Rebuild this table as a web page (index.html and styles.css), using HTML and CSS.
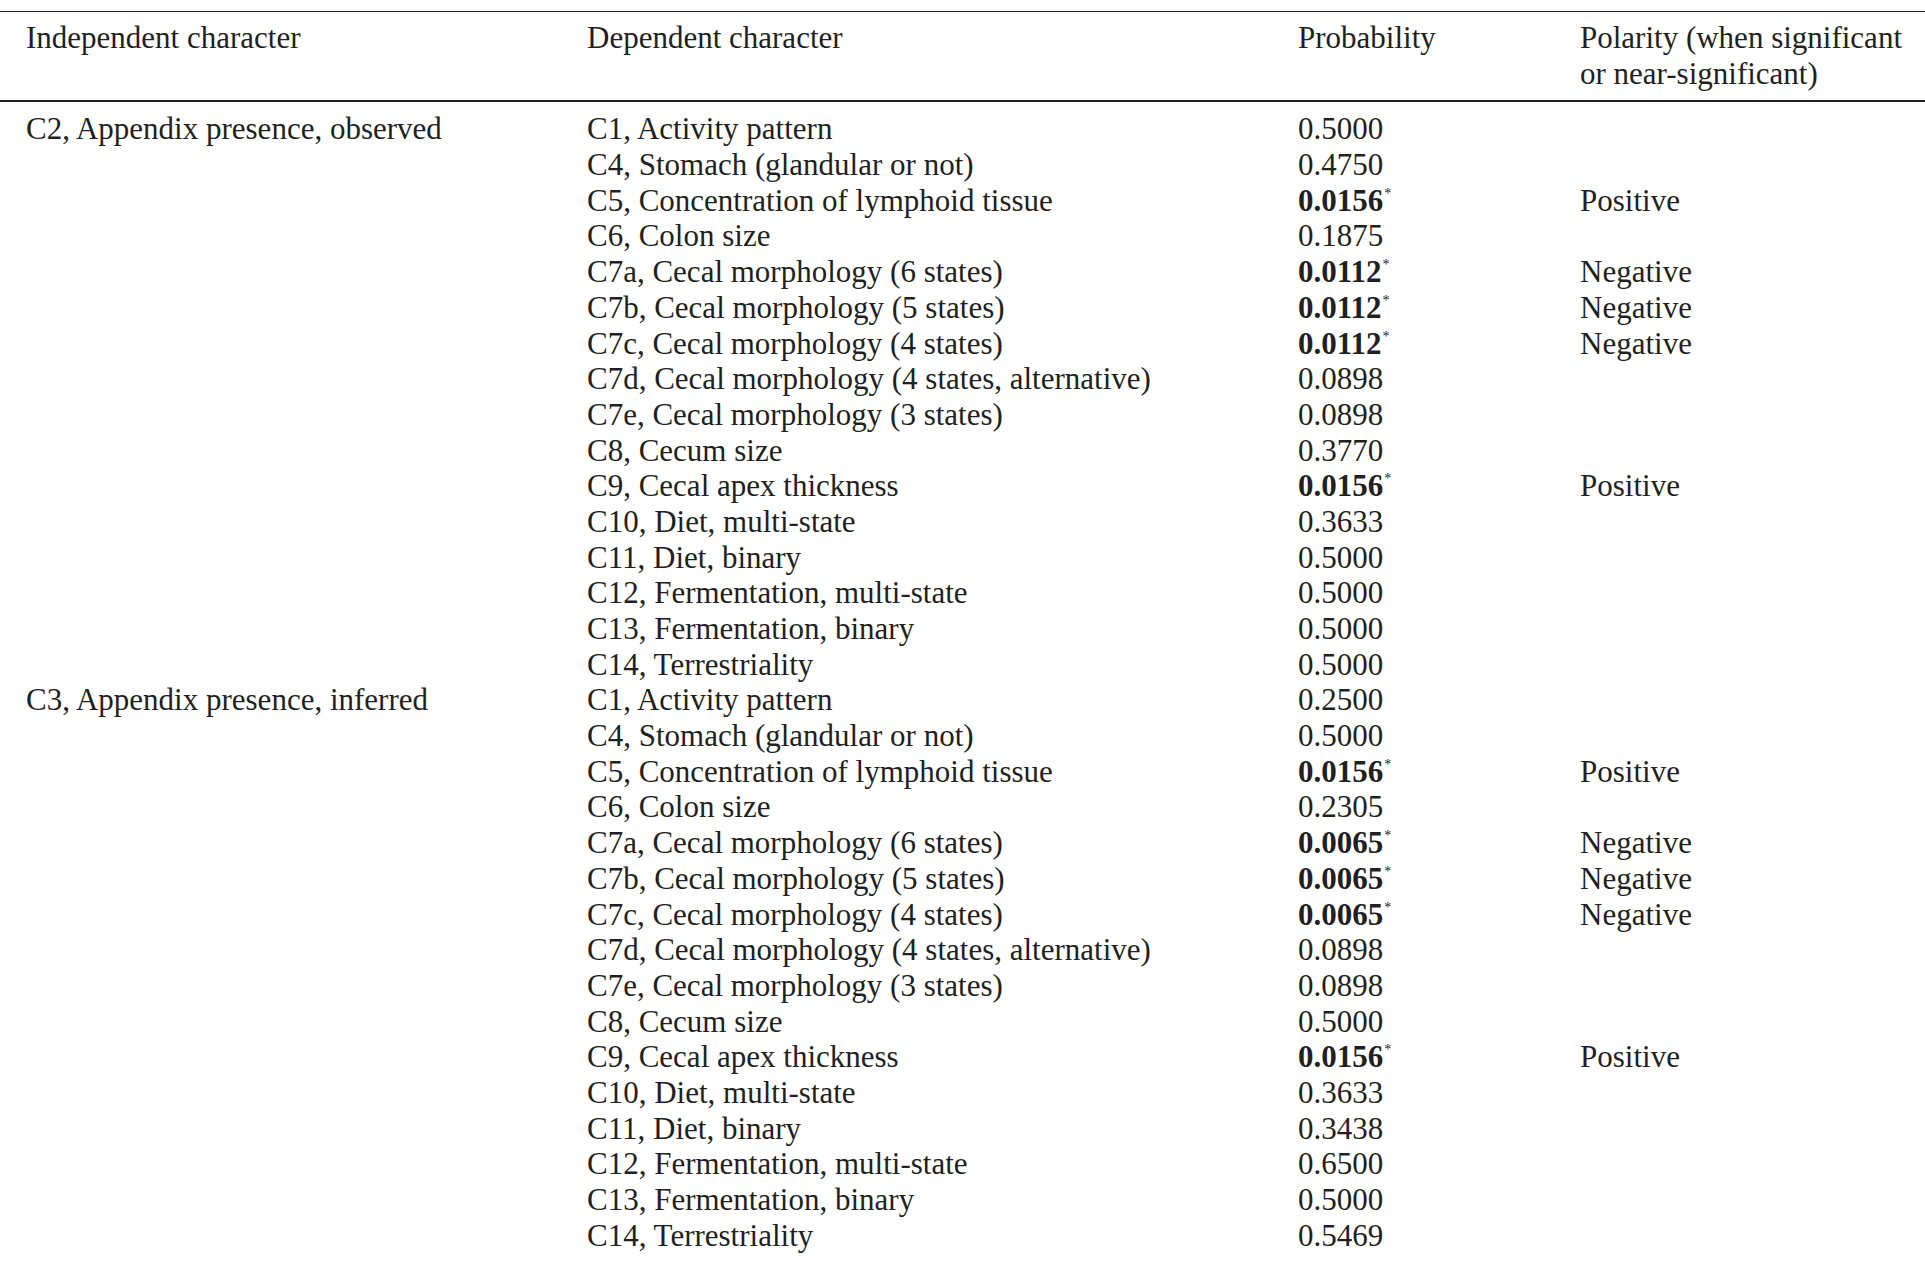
FILE: index.html
```html
<!DOCTYPE html>
<html lang="en">
<head>
<meta charset="utf-8">
<title>Correlation tests</title>
<link rel="stylesheet" href="styles.css">
</head>
<body>
<table class="results">
  <colgroup>
    <col class="c-indep">
    <col class="c-dep">
    <col class="c-prob">
    <col class="c-pol">
  </colgroup>
  <thead>
    <tr>
      <th>Independent character</th>
      <th>Dependent character</th>
      <th>Probability</th>
      <th>Polarity (when significant<br>or near-significant)</th>
    </tr>
  </thead>
  <tbody>
    <tr class="first">
      <td rowspan="16">C2, Appendix presence, observed</td>
      <td>C1, Activity pattern</td><td>0.5000</td><td></td>
    </tr>
    <tr><td>C4, Stomach (glandular or not)</td><td>0.4750</td><td></td></tr>
    <tr><td>C5, Concentration of lymphoid tissue</td><td><b>0.0156</b><sup>*</sup></td><td>Positive</td></tr>
    <tr><td>C6, Colon size</td><td>0.1875</td><td></td></tr>
    <tr><td>C7a, Cecal morphology (6 states)</td><td><b>0.0112</b><sup>*</sup></td><td>Negative</td></tr>
    <tr><td>C7b, Cecal morphology (5 states)</td><td><b>0.0112</b><sup>*</sup></td><td>Negative</td></tr>
    <tr><td>C7c, Cecal morphology (4 states)</td><td><b>0.0112</b><sup>*</sup></td><td>Negative</td></tr>
    <tr><td>C7d, Cecal morphology (4 states, alternative)</td><td>0.0898</td><td></td></tr>
    <tr><td>C7e, Cecal morphology (3 states)</td><td>0.0898</td><td></td></tr>
    <tr><td>C8, Cecum size</td><td>0.3770</td><td></td></tr>
    <tr><td>C9, Cecal apex thickness</td><td><b>0.0156</b><sup>*</sup></td><td>Positive</td></tr>
    <tr><td>C10, Diet, multi-state</td><td>0.3633</td><td></td></tr>
    <tr><td>C11, Diet, binary</td><td>0.5000</td><td></td></tr>
    <tr><td>C12, Fermentation, multi-state</td><td>0.5000</td><td></td></tr>
    <tr><td>C13, Fermentation, binary</td><td>0.5000</td><td></td></tr>
    <tr><td>C14, Terrestriality</td><td>0.5000</td><td></td></tr>
    <tr>
      <td rowspan="16">C3, Appendix presence, inferred</td>
      <td>C1, Activity pattern</td><td>0.2500</td><td></td>
    </tr>
    <tr><td>C4, Stomach (glandular or not)</td><td>0.5000</td><td></td></tr>
    <tr><td>C5, Concentration of lymphoid tissue</td><td><b>0.0156</b><sup>*</sup></td><td>Positive</td></tr>
    <tr><td>C6, Colon size</td><td>0.2305</td><td></td></tr>
    <tr><td>C7a, Cecal morphology (6 states)</td><td><b>0.0065</b><sup>*</sup></td><td>Negative</td></tr>
    <tr><td>C7b, Cecal morphology (5 states)</td><td><b>0.0065</b><sup>*</sup></td><td>Negative</td></tr>
    <tr><td>C7c, Cecal morphology (4 states)</td><td><b>0.0065</b><sup>*</sup></td><td>Negative</td></tr>
    <tr><td>C7d, Cecal morphology (4 states, alternative)</td><td>0.0898</td><td></td></tr>
    <tr><td>C7e, Cecal morphology (3 states)</td><td>0.0898</td><td></td></tr>
    <tr><td>C8, Cecum size</td><td>0.5000</td><td></td></tr>
    <tr><td>C9, Cecal apex thickness</td><td><b>0.0156</b><sup>*</sup></td><td>Positive</td></tr>
    <tr><td>C10, Diet, multi-state</td><td>0.3633</td><td></td></tr>
    <tr><td>C11, Diet, binary</td><td>0.3438</td><td></td></tr>
    <tr><td>C12, Fermentation, multi-state</td><td>0.6500</td><td></td></tr>
    <tr><td>C13, Fermentation, binary</td><td>0.5000</td><td></td></tr>
    <tr><td>C14, Terrestriality</td><td>0.5469</td><td></td></tr>
  </tbody>
</table>
</body>
</html>
```

FILE: styles.css
```css
html, body {
  margin: 0;
  padding: 0;
  background: #ffffff;
}

body {
  font-family: "Liberation Serif", "Times New Roman", serif;
  font-size: 31px;
  line-height: 35.68px;
  color: #231f20;
  overflow: hidden;
}

.results {
  width: 1925px;
  margin-top: 11px;
  border-collapse: separate;
  border-spacing: 0;
  table-layout: fixed;
  border-top: 1px solid #231f20;
}

.c-indep { width: 561px; }
.c-dep { width: 711px; }
.c-prob { width: 282px; }
.c-pol { width: 371px; }

.results th,
.results td {
  padding: 0 0 0 26px;
  text-align: left;
  vertical-align: top;
  white-space: nowrap;
}

.results th {
  font-weight: normal;
  padding-top: 8px;
  padding-bottom: 9px;
  border-bottom: 2px solid #231f20;
}

.results tr.first td {
  padding-top: 9px;
}

.results b {
  font-weight: bold;
}

.results sup {
  font-size: 14px;
  line-height: 0;
  vertical-align: 13px;
  margin-left: 1px;
}
```
